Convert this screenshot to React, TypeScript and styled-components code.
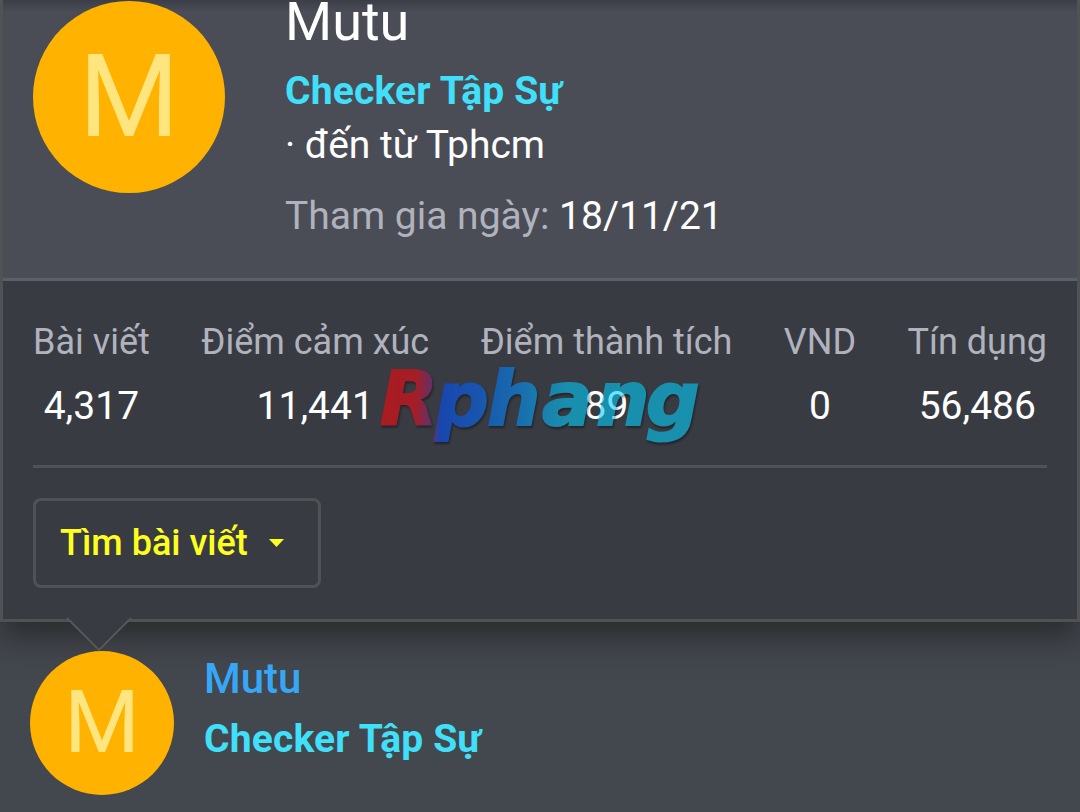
import styled, { createGlobalStyle } from 'styled-components';

const GlobalStyle = createGlobalStyle`
  * {
    box-sizing: border-box;
  }

  body {
    margin: 0;
    background: #43474e;
    font-family: Roboto, sans-serif;
    overflow: hidden;
  }
`;

const Page = styled.div`
  width: 1080px;
  height: 812px;
  overflow: hidden;
  background: #43474e;
`;

const Tooltip = styled.section`
  position: relative;
  height: 622px;
  border: 3px solid #505256;
  border-top: none;
  background: #393b43;
  box-shadow: 0 15px 30px 0 rgba(28, 28, 26, 0.62);
`;

const TooltipHeader = styled.header`
  display: flex;
  gap: 60px;
  height: 281px;
  padding: 1px 30px 0;
  border-bottom: 3px solid #5c6068;
  background: linear-gradient(#3b3e46, #4a4d56 12px);
`;

const Avatar = styled.div<{ $size: number }>`
  display: flex;
  flex-shrink: 0;
  align-items: center;
  justify-content: center;
  width: ${({ $size }) => $size}px;
  height: ${({ $size }) => $size}px;
  border-radius: 50%;
  background: #ffb300;
  color: #ffe57f;
  font-size: ${({ $size }) => $size * 0.6}px;
  line-height: 1;
`;

const MemberInfo = styled.div`
  display: flex;
  flex-direction: column;
  color: #fefefe;
  font-size: 39px;
  line-height: 54px;
  white-space: nowrap;
`;

const MemberName = styled.h4`
  height: 63px;
  margin: 0;
  font-size: 54px;
  font-weight: 400;
  line-height: 42px;
`;

const UserTitle = styled.div`
  color: #40e0fb;
  font-size: 39px;
  font-weight: 700;
  letter-spacing: 0.18px;
  line-height: 54px;
  white-space: nowrap;
`;

const JoinDate = styled.div`
  margin-top: 17px;
`;

const Muted = styled.span`
  color: #b0b3bd;
`;

const Stats = styled.div`
  display: flex;
  justify-content: space-between;
  height: 187px;
  margin: 0 30px;
  padding-top: 34px;
  border-bottom: 3px solid #505256;
`;

const Stat = styled.dl`
  margin: 0;
  text-align: center;
  white-space: nowrap;
`;

const StatLabel = styled.dt`
  color: #b0b3bd;
  font-size: 36px;
  line-height: 54px;
`;

const StatValue = styled.dd`
  margin: 10px 0 0;
  color: #fefefe;
  font-size: 39px;
  line-height: 54px;
`;

const FindButton = styled.button`
  display: flex;
  align-items: center;
  gap: 21px;
  width: 288px;
  height: 90px;
  margin: 30px 0 0 30px;
  padding: 0 0 0 24px;
  border: 3px solid #505256;
  border-radius: 8px;
  background: transparent;
  color: #ffff1f;
  font-family: inherit;
  font-size: 36px;
  font-weight: 500;
  white-space: nowrap;
`;

const Arrow = styled.svg`
  position: absolute;
  top: 615px;
  left: 61px;
`;

const Watermark = styled.svg`
  position: absolute;
  top: 355px;
  left: 367px;
  opacity: 0.57;
  filter: drop-shadow(1px 2px 1px rgba(0, 0, 0, 0.7));
`;

const Post = styled.article`
  display: flex;
  position: relative;
  gap: 30px;
  padding: 29px 30px 0;
`;

const PostUser = styled.div`
  display: flex;
  flex-direction: column;
  gap: 5px;
`;

const Username = styled.a`
  color: #36a7f6;
  font-size: 42px;
  font-weight: 500;
  line-height: 56px;
`;

const stats = [
  { label: 'Bài viết', value: '4,317' },
  { label: 'Điểm cảm xúc', value: '11,441' },
  { label: 'Điểm thành tích', value: '89' },
  { label: 'VND', value: '0' },
  { label: 'Tín dụng', value: '56,486' },
];

const RphangLogo = () => (
  <Watermark width="350" height="100" viewBox="0 0 350 100">
    <defs>
      <linearGradient id="rphang" gradientUnits="userSpaceOnUse" x1="10" y1="50" x2="332" y2="62">
        <stop offset="0" stopColor="#ff0408" />
        <stop offset="0.11" stopColor="#f70810" />
        <stop offset="0.17" stopColor="#6a30a0" />
        <stop offset="0.19" stopColor="#0050ff" />
        <stop offset="0.3" stopColor="#0068ff" />
        <stop offset="0.42" stopColor="#0090ff" />
        <stop offset="0.58" stopColor="#02cfff" />
        <stop offset="1" stopColor="#02d1ff" />
      </linearGradient>
    </defs>
    <text
      x="10 65 117 172 226 276"
      y="70"
      fill="url(#rphang)"
      stroke="url(#rphang)"
      strokeWidth="2"
      fontFamily="DejaVu Sans, sans-serif"
      fontSize="75"
      fontStyle="italic"
      fontWeight="700"
    >
      Rphang
    </text>
  </Watermark>
);

const MemberTooltip = () => (
  <Tooltip>
    <TooltipHeader>
      <Avatar $size={192}>M</Avatar>
      <MemberInfo>
        <MemberName>Mutu</MemberName>
        <UserTitle>Checker Tập Sự</UserTitle>
        <div>· đến từ Tphcm</div>
        <JoinDate>
          <Muted>Tham gia ngày:</Muted> 18/11/21
        </JoinDate>
      </MemberInfo>
    </TooltipHeader>
    <Stats>
      {stats.map(({ label, value }) => (
        <Stat key={label}>
          <StatLabel>{label}</StatLabel>
          <StatValue>{value}</StatValue>
        </Stat>
      ))}
    </Stats>
    <FindButton>
      Tìm bài viết
      <svg width="15" height="8" viewBox="0 0 15 8">
        <path d="M0 0h15L7.5 8z" fill="currentColor" />
      </svg>
    </FindButton>
    <Arrow width="70" height="38" viewBox="0 0 70 38">
      <path d="M3 0v3l32 32L67 3V0z" fill="#393b43" />
      <path d="M3 3l32 32L67 3" fill="none" stroke="#56585c" strokeWidth="1.8" />
    </Arrow>
    <RphangLogo />
  </Tooltip>
);

const App = () => {
  return (
    <Page>
      <GlobalStyle />
      <MemberTooltip />
      <Post>
        <Avatar $size={144}>M</Avatar>
        <PostUser>
          <Username>Mutu</Username>
          <UserTitle>Checker Tập Sự</UserTitle>
        </PostUser>
      </Post>
    </Page>
  );
};
export default App;
